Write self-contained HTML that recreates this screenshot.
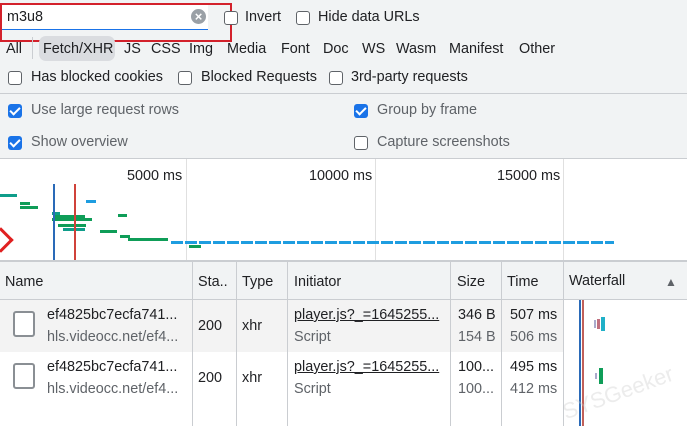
<!DOCTYPE html>
<html><head><style>
*{margin:0;padding:0;box-sizing:border-box}
body{width:687px;height:426px;overflow:hidden;background:#f1f3f4;font-family:"Liberation Sans",sans-serif;font-size:14.4px;color:#202124;position:relative}
.a{position:absolute;white-space:nowrap}
.cb{position:absolute;width:14px;height:14px;border:1.5px solid #5f6368;border-radius:3px;background:#fff}
.ck{position:absolute;width:14px;height:14px;border-radius:3px;background:#1a73e8}
.ck:after{content:"";position:absolute;left:4px;top:1px;width:4px;height:8px;border:solid #fff;border-width:0 2px 2px 0;transform:rotate(45deg)}
.g{color:#5f6368}
.hl{position:absolute;left:0;width:687px;height:1px;background:#cacdd1}
.vl{position:absolute;width:1px;background:#cacdd1}
.b{position:absolute;height:3px}
</style></head><body>
<div class="a" style="left:0;top:5px;width:208px;height:25px;background:#fff;border-bottom:1px solid #1a73e8"></div>
<div class="a" style="left:7px;top:9px">m3u8</div>
<div class="a" style="left:191px;top:9px;width:15px;height:15px;border-radius:50%;background:#9aa0a6;color:#fff;font-size:13px;line-height:15px;text-align:center;font-weight:bold">×</div>
<div class="a" style="left:0;top:3px;width:232px;height:39px;border:2px solid #d3212b"></div>
<div class="cb" style="left:224px;top:11px"></div><div class="a" style="left:245px;top:9px">Invert</div>
<div class="cb" style="left:296px;top:11px"></div><div class="a" style="left:318px;top:9px">Hide data URLs</div>
<div class="a" style="left:6px;top:41px">All</div>
<div class="a" style="left:32px;top:37px;width:1px;height:22px;background:#cacdd1"></div>
<div class="a" style="left:39px;top:36px;width:76px;height:25px;background:#dadce0;border-radius:7px"></div>
<div class="a" style="left:43px;top:41px">Fetch/XHR</div>
<div class="a" style="left:124px;top:41px">JS</div>
<div class="a" style="left:151px;top:41px">CSS</div>
<div class="a" style="left:189px;top:41px">Img</div>
<div class="a" style="left:227px;top:41px">Media</div>
<div class="a" style="left:281px;top:41px">Font</div>
<div class="a" style="left:323px;top:41px">Doc</div>
<div class="a" style="left:362px;top:41px">WS</div>
<div class="a" style="left:396px;top:41px">Wasm</div>
<div class="a" style="left:449px;top:41px">Manifest</div>
<div class="a" style="left:519px;top:41px">Other</div>
<div class="cb" style="left:8px;top:71px"></div><div class="a" style="left:31px;top:69px">Has blocked cookies</div>
<div class="cb" style="left:178px;top:71px"></div><div class="a" style="left:201px;top:69px">Blocked Requests</div>
<div class="cb" style="left:329px;top:71px"></div><div class="a" style="left:351px;top:69px">3rd-party requests</div>
<div class="hl" style="top:93px"></div>
<div class="ck" style="left:8px;top:104px"></div><div class="a g" style="left:31px;top:102px">Use large request rows</div>
<div class="ck" style="left:354px;top:104px"></div><div class="a g" style="left:377px;top:102px">Group by frame</div>
<div class="ck" style="left:8px;top:136px"></div><div class="a g" style="left:31px;top:134px">Show overview</div>
<div class="cb" style="left:354px;top:136px"></div><div class="a g" style="left:377px;top:134px">Capture screenshots</div>
<div class="hl" style="top:158px"></div>
<div class="a" style="left:0;top:159px;width:687px;height:101px;background:#fff"></div>
<div class="vl" style="left:186px;top:159px;height:101px;background:#e0e0e0"></div>
<div class="vl" style="left:375px;top:159px;height:101px;background:#e0e0e0"></div>
<div class="vl" style="left:563px;top:159px;height:101px;background:#e0e0e0"></div>
<div class="a" style="left:127px;top:168px">5000 ms</div>
<div class="a" style="left:309px;top:168px">10000 ms</div>
<div class="a" style="left:497px;top:168px">15000 ms</div>
<div class="b" style="left:0;top:194px;width:17px;background:#0f9d8a"></div>
<div class="b" style="left:20px;top:202px;width:10px;background:#0f9d58"></div>
<div class="b" style="left:20px;top:206px;width:18px;background:#0f9d58"></div>
<div class="b" style="left:86px;top:200px;width:10px;background:#1e9de0"></div>
<div class="b" style="left:52px;top:212px;width:8px;background:#0f9d8a"></div>
<div class="b" style="left:55px;top:215px;width:30px;background:#0f9d58"></div>
<div class="b" style="left:52px;top:218px;width:40px;background:#0f9d58"></div>
<div class="b" style="left:118px;top:214px;width:9px;background:#0f9d58"></div>
<div class="b" style="left:58px;top:224px;width:28px;background:#0f9d58"></div>
<div class="b" style="left:63px;top:228px;width:22px;background:#0f9d8a"></div>
<div class="b" style="left:100px;top:230px;width:17px;background:#0f9d58"></div>
<div class="b" style="left:120px;top:235px;width:10px;background:#0f9d58"></div>
<div class="b" style="left:128px;top:238px;width:40px;background:#0f9d58"></div>
<div class="b" style="left:171px;top:241px;width:443px;background:repeating-linear-gradient(90deg,#1e9de0 0 12px,#fff 12px 14px)"></div>
<div class="b" style="left:189px;top:245px;width:12px;background:#0f9d58"></div>
<div class="a" style="left:53px;top:184px;width:2px;height:76px;background:#2a6ab8"></div>
<div class="a" style="left:74px;top:184px;width:2px;height:76px;background:#d0423a"></div>
<div class="a" style="left:-8px;top:231px;width:18px;height:18px;border:3px solid #e02020;border-left:none;border-bottom:none;transform:rotate(45deg)"></div>
<div class="hl" style="top:260px;height:2px;background:#cacdd1"></div>
<div class="a" style="left:0;top:262px;width:687px;height:38px;background:#f1f3f4;border-bottom:1px solid #cacdd1"></div>
<div class="a" style="left:0;top:300px;width:563px;height:52px;background:#f3f3f3"></div>
<div class="a" style="left:0;top:352px;width:687px;height:74px;background:#fff"></div>
<div class="a" style="left:563px;top:300px;width:124px;height:52px;background:#fff"></div>
<div class="vl" style="left:192px;top:262px;height:164px"></div>
<div class="vl" style="left:236px;top:262px;height:164px"></div>
<div class="vl" style="left:287px;top:262px;height:164px"></div>
<div class="vl" style="left:450px;top:262px;height:164px"></div>
<div class="vl" style="left:501px;top:262px;height:164px"></div>
<div class="vl" style="left:563px;top:262px;height:164px"></div>
<div class="a" style="left:5px;top:274px">Name</div>
<div class="a" style="left:198px;top:274px">Sta..</div>
<div class="a" style="left:242px;top:274px">Type</div>
<div class="a" style="left:294px;top:274px">Initiator</div>
<div class="a" style="left:457px;top:274px">Size</div>
<div class="a" style="left:507px;top:274px">Time</div>
<div class="a" style="left:569px;top:273px">Waterfall</div>
<div class="a" style="left:665px;top:275px;font-size:12px;color:#5f6368">▲</div>
<div class="a" style="left:579px;top:300px;width:2px;height:126px;background:#2a6ab8"></div>
<div class="a" style="left:582px;top:300px;width:2px;height:126px;background:#c0605a"></div>
<div class="a" style="left:13px;top:311px;width:22px;height:26px;border:2px solid #8a8f94;border-radius:3px;background:#fff"></div>
<div class="a" style="left:13px;top:363px;width:22px;height:26px;border:2px solid #8a8f94;border-radius:3px;background:#fff"></div>
<div class="a" style="left:47px;top:307px">ef4825bc7ecfa741...</div>
<div class="a g" style="left:47px;top:329px">hls.videocc.net/ef4...</div>
<div class="a" style="left:47px;top:359px">ef4825bc7ecfa741...</div>
<div class="a g" style="left:47px;top:381px">hls.videocc.net/ef4...</div>
<div class="a" style="left:198px;top:318px">200</div><div class="a" style="left:242px;top:318px">xhr</div>
<div class="a" style="left:198px;top:370px">200</div><div class="a" style="left:242px;top:370px">xhr</div>
<div class="a" style="left:294px;top:307px;text-decoration:underline">player.js?_=1645255...</div>
<div class="a g" style="left:294px;top:329px">Script</div>
<div class="a" style="left:294px;top:359px;text-decoration:underline">player.js?_=1645255...</div>
<div class="a g" style="left:294px;top:381px">Script</div>
<div class="a" style="left:458px;top:307px">346 B</div><div class="a g" style="left:458px;top:329px">154 B</div>
<div class="a" style="left:458px;top:359px">100...</div><div class="a g" style="left:458px;top:381px">100...</div>
<div class="a" style="left:510px;top:307px">507 ms</div><div class="a g" style="left:510px;top:329px">506 ms</div>
<div class="a" style="left:510px;top:359px">495 ms</div><div class="a g" style="left:510px;top:381px">412 ms</div>
<div class="a" style="left:594px;top:320px;width:2px;height:8px;background:#aac"></div>
<div class="a" style="left:597px;top:319px;width:3px;height:10px;background:#c07080"></div>
<div class="a" style="left:601px;top:317px;width:4px;height:14px;background:#20b0c8"></div>
<div class="a" style="left:595px;top:373px;width:2px;height:6px;background:#aac"></div>
<div class="a" style="left:599px;top:368px;width:4px;height:16px;background:#0f9d58"></div>
<div class="a" style="left:560px;top:380px;font-size:22px;color:rgba(200,200,200,0.35);transform:rotate(-20deg)">SYSGeeker</div>
</body></html>
